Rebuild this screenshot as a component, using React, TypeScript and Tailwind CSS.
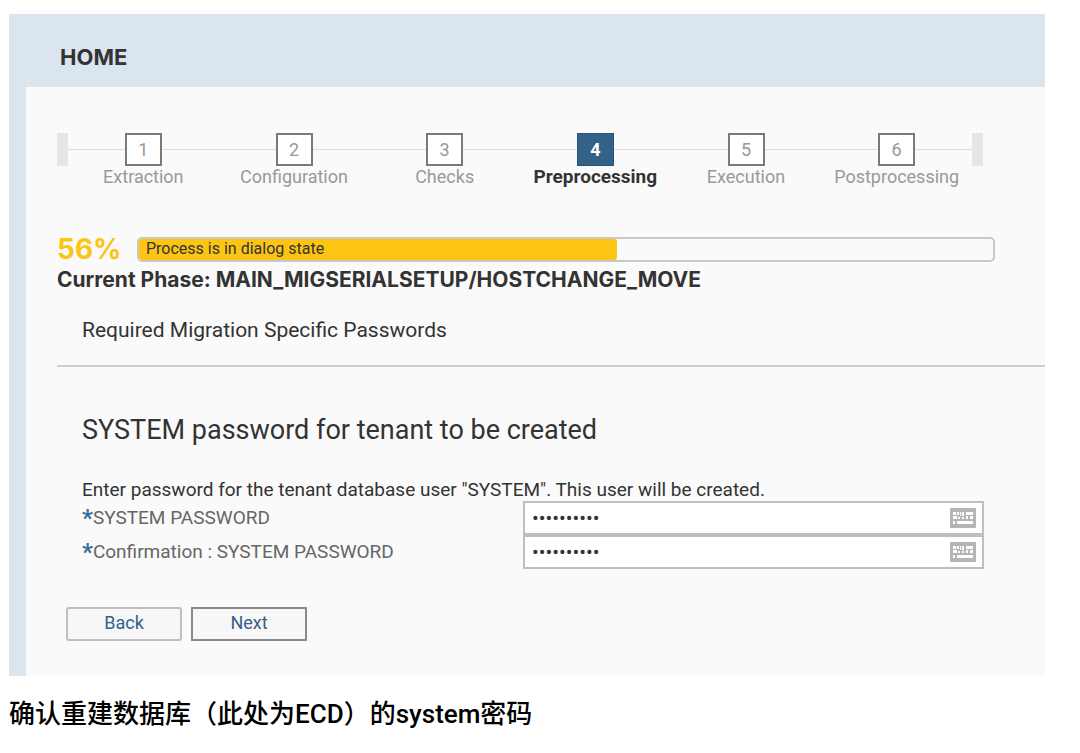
import React, { useState } from "react";

const steps = ["Extraction", "Configuration", "Checks", "Preprocessing", "Execution", "Postprocessing"];
const currentStep = 3;
const progress = 56;

function KeyboardIcon() {
  return (
    <svg viewBox="0 0 26 20" className="h-5 w-[26px]" aria-hidden="true">
      <rect width="26" height="20" rx="1" fill="#b5b5b5" />
      <path
        fill="#fff"
        d="M3 4h3v3H3zM7 4h2v3H7zM10 4h1v4h-1zM12 4h2v4h-2zM16 4h7v3h-7zM3 8h4v3H3zM8 9h2v2H8zM12 9h2v2h-2zM16 8h2v3h-2zM20 8h3v3h-3zM3 13h2v3H3zM7 13h16v3H7z"
      />
    </svg>
  );
}

function StepBar() {
  return (
    <div className="flex items-start">
      <div className="h-[33px] w-[11px] bg-[#e6e6e6]" />
      <ol className="grid flex-1 grid-cols-6">
        {steps.map((label, i) => {
          const active = i === currentStep;
          return (
            <li key={label} className="flex flex-col items-center">
              <div className="flex w-full items-center">
                <span className="h-px flex-1 bg-[#dcdcdc]" />
                <span
                  className={
                    active
                      ? "flex h-[33px] w-[37px] items-center justify-center border border-[#2a527a] bg-[#346187] text-lg font-bold text-white"
                      : "flex h-[33px] w-[37px] items-center justify-center border-2 border-[#7a7a7a] bg-white text-lg text-[#999]"
                  }
                >
                  {i + 1}
                </span>
                <span className="h-px flex-1 bg-[#dcdcdc]" />
              </div>
              <span className={active ? "text-[19px] leading-[22px] font-bold text-[#333]" : "text-lg leading-[22px] text-[#999]"}>
                {label}
              </span>
            </li>
          );
        })}
      </ol>
      <div className="h-[33px] w-[11px] bg-[#e6e6e6]" />
    </div>
  );
}

type PasswordRowProps = {
  id: string;
  label: string;
};

function PasswordRow({ id, label }: PasswordRowProps) {
  const [value, setValue] = useState("Password10");

  return (
    <div className="flex items-center">
      <label htmlFor={id} className="flex w-[441px] items-center text-[19px] leading-6 text-[#666]">
        <span className="text-2xl leading-6 font-bold text-[#346fa3]">*</span>
        {label}
      </label>
      <div className="flex h-[34px] flex-1 items-center border-2 border-[#bfbfbf] bg-white pr-1.5">
        <input
          id={id}
          type="password"
          value={value}
          onChange={(e) => setValue(e.target.value)}
          className="h-full min-w-0 flex-1 px-[7px] text-xl text-[#333] outline-none"
        />
        <button type="button" aria-label="Keyboard">
          <KeyboardIcon />
        </button>
      </div>
    </div>
  );
}

export default function App() {
  return (
    <div className="min-h-screen bg-white pt-3.5 pr-[35px] pl-[9px] font-['Roboto','Noto_Sans_CJK_SC',sans-serif] text-[#333]">
      <div className="bg-[#dae5ef] pl-[17px]">
        <header className="flex h-[73px] items-center pt-3 pl-[34px]">
          <h1 className="font-['Inter',sans-serif] text-[22px] leading-7 font-bold">HOME</h1>
        </header>

        <main className="bg-[#fafafa] pt-[46px] pb-[35px] pl-[31px]">
          <div className="pr-[62px]">
            <StepBar />
          </div>

          <section className="mt-[45px] pr-[50px]">
            <div className="flex items-center">
              <span className="w-20 font-['Inter',sans-serif] text-[28px] leading-8 font-bold text-[#fdc513]">
                {progress}%
              </span>
              <div className="h-[25px] flex-1 rounded-[5px] border-2 border-[#c8c8c8]">
                <div
                  className="flex h-full items-center rounded-[3px] bg-[#fdc513] pl-[7px] text-base whitespace-nowrap"
                  style={{ width: `${progress}%` }}
                >
                  Process is in dialog state
                </div>
              </div>
            </div>
            <p className="font-['Inter',sans-serif] text-[21px] leading-[30px] font-bold">
              Current Phase: MAIN_MIGSERIALSETUP/HOSTCHANGE_MOVE
            </p>
          </section>

          <h2 className="mt-[19px] border-b-2 border-[#cfcfcf] pb-[19px] pl-[25px] text-[21px] leading-8">
            Required Migration Specific Passwords
          </h2>

          <form className="mt-[47px] pr-[61px]" onSubmit={(e) => e.preventDefault()}>
            <div className="pl-[25px]">
              <h3 className="text-[27px] leading-8">SYSTEM password for tenant to be created</h3>
              <p className="mt-[33px] text-[19px] leading-[22px]">
                Enter password for the tenant database user "SYSTEM". This user will be created.
              </p>
              <PasswordRow id="system-password" label="SYSTEM PASSWORD" />
              <PasswordRow id="confirm-password" label="Confirmation : SYSTEM PASSWORD" />
            </div>
            <div className="mt-[38px] flex gap-[9px] pl-[9px]">
              <button
                type="button"
                className="h-[34px] w-[116px] rounded-[3px] border-2 border-[#bfbfbf] bg-[#f7f7f7] pb-0.5 text-lg leading-6 text-[#346187]"
              >
                Back
              </button>
              <button
                type="submit"
                className="h-[34px] w-[116px] border-2 border-[#8a8a8a] bg-[#f7f7f7] pb-0.5 text-lg leading-6 text-[#346187]"
              >
                Next
              </button>
            </div>
          </form>
        </main>
      </div>

      <p lang="zh-CN" className="pt-5 text-[26px] leading-9 font-medium text-black">
        确认重建数据库（此处为ECD）的system密码
      </p>
    </div>
  );
}
